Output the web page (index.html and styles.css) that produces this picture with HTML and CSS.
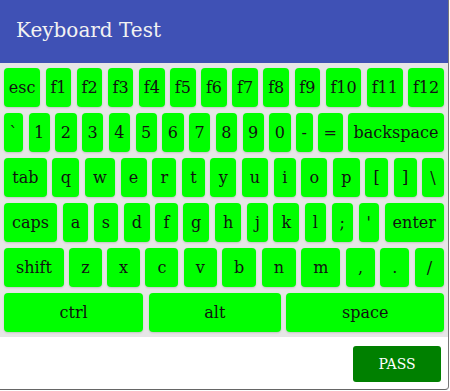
FILE: index.html
```html
<!DOCTYPE html>
<html lang="en">
<head>
  <meta charset="UTF-8" />
  <meta name="viewport" content="width=device-width, initial-scale=1.0" />
  <title>Keyboard Test</title>
  <link rel="stylesheet" href="styles.css">
</head>
<body>
  <div class="dialog">
    <header class="dialog-title">Keyboard Test</header>

    <div class="keyboard">
      <div class="row">
        <div class="key">esc</div>
        <div class="key">f1</div>
        <div class="key">f2</div>
        <div class="key">f3</div>
        <div class="key">f4</div>
        <div class="key">f5</div>
        <div class="key">f6</div>
        <div class="key">f7</div>
        <div class="key">f8</div>
        <div class="key">f9</div>
        <div class="key">f10</div>
        <div class="key">f11</div>
        <div class="key">f12</div>
      </div>
      <div class="row">
        <div class="key">`</div>
        <div class="key">1</div>
        <div class="key">2</div>
        <div class="key">3</div>
        <div class="key">4</div>
        <div class="key">5</div>
        <div class="key">6</div>
        <div class="key">7</div>
        <div class="key">8</div>
        <div class="key">9</div>
        <div class="key">0</div>
        <div class="key">-</div>
        <div class="key">=</div>
        <div class="key">backspace</div>
      </div>
      <div class="row">
        <div class="key">tab</div>
        <div class="key">q</div>
        <div class="key">w</div>
        <div class="key">e</div>
        <div class="key">r</div>
        <div class="key">t</div>
        <div class="key">y</div>
        <div class="key">u</div>
        <div class="key">i</div>
        <div class="key">o</div>
        <div class="key">p</div>
        <div class="key">[</div>
        <div class="key">]</div>
        <div class="key">\</div>
      </div>
      <div class="row">
        <div class="key">caps</div>
        <div class="key">a</div>
        <div class="key">s</div>
        <div class="key">d</div>
        <div class="key">f</div>
        <div class="key">g</div>
        <div class="key">h</div>
        <div class="key">j</div>
        <div class="key">k</div>
        <div class="key">l</div>
        <div class="key">;</div>
        <div class="key">'</div>
        <div class="key">enter</div>
      </div>
      <div class="row">
        <div class="key">shift</div>
        <div class="key">z</div>
        <div class="key">x</div>
        <div class="key">c</div>
        <div class="key">v</div>
        <div class="key">b</div>
        <div class="key">n</div>
        <div class="key">m</div>
        <div class="key">,</div>
        <div class="key">.</div>
        <div class="key">/</div>
      </div>
      <div class="row">
        <div class="key">ctrl</div>
        <div class="key">alt</div>
        <div class="key">space</div>
      </div>
    </div>

    <div class="actions">
      <button class="pass">PASS</button>
    </div>
  </div>
</body>
</html>
```

FILE: styles.css
```css
body {
  margin: 0;
  font-family: "DejaVu Serif", serif;
  background: #fff;
}
.dialog {
  width: 448px;
  height: 389px;
  border-right: 1px solid #777;
  border-bottom: 1px solid #666;
  border-bottom-right-radius: 4px;
  display: flex;
  flex-direction: column;
  overflow: hidden;
}
.dialog-title {
  height: 63px;
  box-sizing: border-box;
  padding: 18px 16px 0;
  background-color: #3f51b5;
  color: #f2f2f2;
  font-size: 20px;
}
.keyboard {
  background-color: #e6e6e6;
  padding: 5px 4px;
  display: flex;
  flex-direction: column;
  gap: 6px;
}
.row {
  display: flex;
  gap: 5.5px;
}
.key {
  flex: 1 1 auto;
  height: 39px;
  padding: 0 4px;
  display: flex;
  align-items: center;
  justify-content: center;
  background-color: #00ff00;
  border-radius: 4px;
  box-shadow: 0 1px 2px rgba(0, 0, 0, 0.15);
  color: #111;
  font-size: 16px;
}
.actions {
  display: flex;
  justify-content: flex-end;
  padding: 9px 7px 0;
}
.pass {
  width: 88px;
  height: 36px;
  border: none;
  border-radius: 3px;
  background-color: #008000;
  color: #fff;
  font-family: "DejaVu Serif", serif;
  font-size: 14px;
}
```
